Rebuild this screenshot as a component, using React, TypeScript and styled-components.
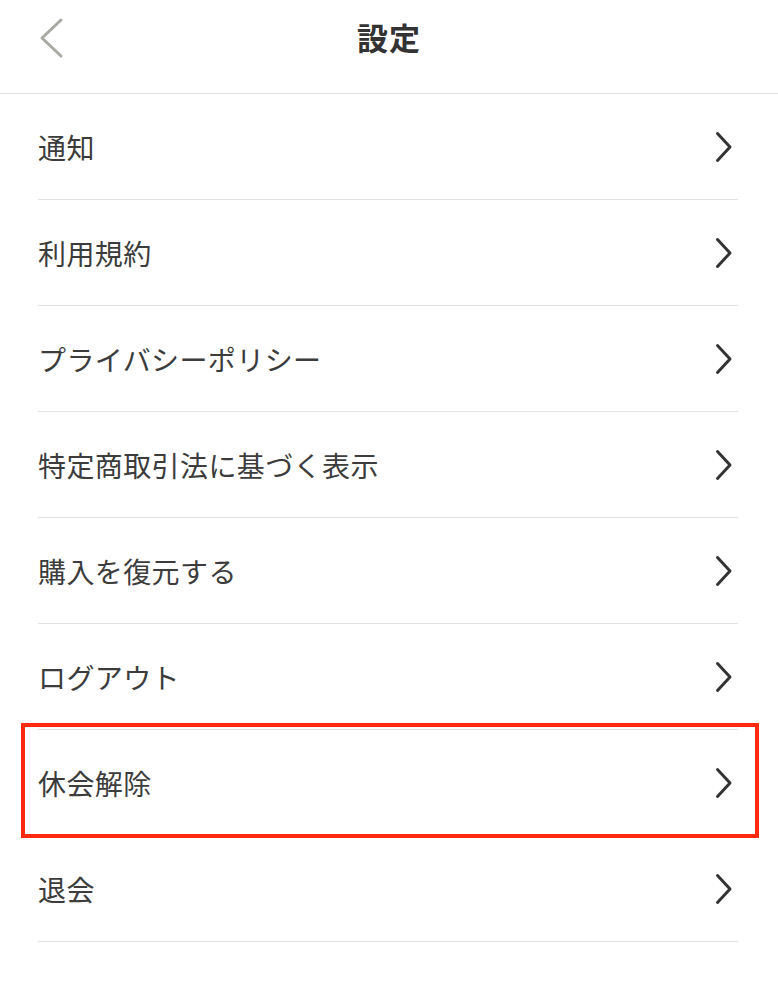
import styled, { createGlobalStyle } from "styled-components";

const GlobalStyle = createGlobalStyle`
  html, body {
    margin: 0;
    padding: 0;
    background: #fff;
  }
  body {
    font-family: "Noto Sans CJK JP", "Noto Sans", sans-serif;
    color: #333;
  }
`;

const Page = styled.div`
  width: 778px;
  min-height: 1006px;
  background: #fff;
`;

const Header = styled.header`
  padding-bottom: 17px;
  border-bottom: 1px solid #e2e2e2;
`;

const Bar = styled.div`
  position: relative;
  height: 76px;
  display: flex;
  align-items: center;
  justify-content: center;
`;

const BackButton = styled.button`
  position: absolute;
  left: 38px;
  top: 17px;
  width: 26px;
  height: 42px;
  padding: 0;
  border: none;
  background: none;
  display: flex;
  align-items: center;
  justify-content: center;
  cursor: pointer;
`;

const Title = styled.h1`
  margin: 0 0 4px;
  font-size: 31px;
  font-weight: 700;
  color: #333;
  letter-spacing: 1px;
`;

const List = styled.ul`
  list-style: none;
  margin: 0;
  padding: 0 40px 0 38px;
`;

type RowProps = { $highlight?: boolean };

const Row = styled.li<RowProps>`
  position: relative;
  height: 105px;
  display: flex;
  align-items: center;
  justify-content: space-between;
  border-bottom: 1px solid #e2e2e2;
  cursor: pointer;

  ${({ $highlight }) =>
    $highlight &&
    `
    &::after {
      content: "";
      position: absolute;
      left: -17px;
      right: -21px;
      top: -7px;
      bottom: -3px;
      border: 4px solid #ff2a10;
      pointer-events: none;
    }
  `}
`;

const Label = styled.span`
  font-size: 28px;
  font-weight: 400;
  letter-spacing: 0.4px;
  color: #3c3c3c;
`;

const ChevronBox = styled.span`
  display: flex;
  align-items: center;
  margin-right: 4px;
`;

function ChevronRight() {
  return (
    <svg width="20" height="32" viewBox="0 0 20 32">
      <path
        d="M3.5 2.5 L16 16 L3.5 29.5"
        fill="none"
        stroke="#333"
        strokeWidth="3"
        strokeLinecap="round"
        strokeLinejoin="round"
      />
    </svg>
  );
}

function ChevronLeft() {
  return (
    <svg width="26" height="42" viewBox="0 0 26 42">
      <path
        d="M23 3 L4 21 L23 39"
        fill="none"
        stroke="#a9a9a2"
        strokeWidth="3"
        strokeLinecap="round"
        strokeLinejoin="round"
      />
    </svg>
  );
}

const items = [
  "通知",
  "利用規約",
  "プライバシーポリシー",
  "特定商取引法に基づく表示",
  "購入を復元する",
  "ログアウト",
  "休会解除",
  "退会",
];

export default function App() {
  return (
    <Page>
      <GlobalStyle />
      <Header>
        <Bar>
          <BackButton aria-label="戻る">
            <ChevronLeft />
          </BackButton>
          <Title>設定</Title>
        </Bar>
      </Header>
      <List>
        {items.map((item) => (
          <Row key={item} $highlight={item === "休会解除"}>
            <Label>{item}</Label>
            <ChevronBox>
              <ChevronRight />
            </ChevronBox>
          </Row>
        ))}
      </List>
    </Page>
  );
}
